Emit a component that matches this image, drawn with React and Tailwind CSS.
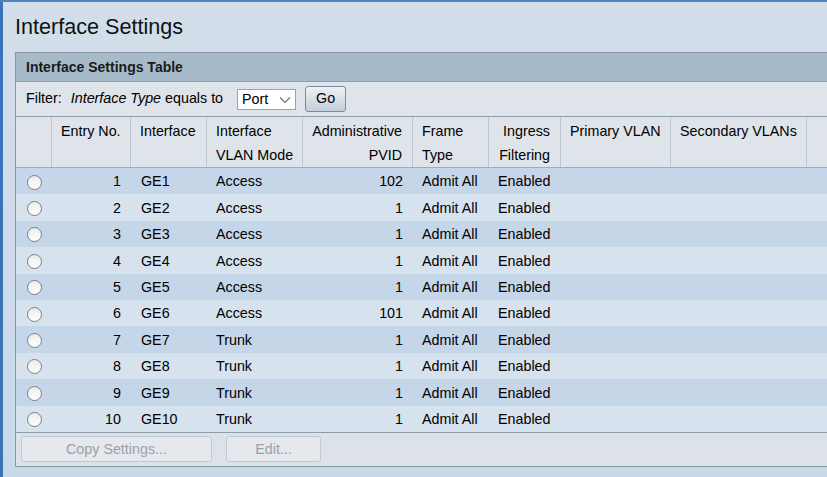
import React from "react";

const rows = [
  [1, "GE1", "Access", 102],
  [2, "GE2", "Access", 1],
  [3, "GE3", "Access", 1],
  [4, "GE4", "Access", 1],
  [5, "GE5", "Access", 1],
  [6, "GE6", "Access", 101],
  [7, "GE7", "Trunk", 1],
  [8, "GE8", "Trunk", 1],
  [9, "GE9", "Trunk", 1],
  [10, "GE10", "Trunk", 1],
];

const cols = "grid grid-cols-[36px_79px_76px_96px_110px_76px_72px_110px_136px_1fr]";

function Radio() {
  return (
    <span className="block w-[15px] h-[15px] rounded-full border border-[#7b7f85] bg-gradient-to-b from-[#ececec] to-[#ffffff]" />
  );
}

function HCell({ children, align = "left", last = false }) {
  return (
    <div
      className={`flex flex-col pt-[2px] leading-[24px] border-r ${last ? "border-r-0" : "border-[#bcc6d0]"} ${
        align === "right" ? "items-end pr-[10px]" : "items-start pl-[9px]"
      }`}
    >
      {children}
    </div>
  );
}

export default function App() {
  return (
    <div
      className="w-[827px] h-[477px] overflow-hidden bg-[#c6d7e9] text-black flex flex-col border-t-2 border-[#4f82ba]"
      style={{ fontFamily: '"Liberation Sans", Arial, sans-serif' }}
    >
      <div className="flex flex-1 min-h-0">
        <div className="w-[3px] bg-[#3b74b6] shrink-0" />
        <div className="flex-1 flex flex-col bg-gradient-to-b from-[#d3deea] to-[#c9d9ea]">
          <div className="h-[50px] pl-[12px] pt-[12px] text-[21.6px] leading-[26px] text-[#111]">
            Interface Settings
          </div>
          <div className="ml-[12px] border-l border-t border-b border-[#8797a6] flex flex-col text-[14.3px]">
            <div className="h-[29px] bg-[#a6bac9] border-b border-[#8d9dab] flex items-center pl-[10px] font-bold text-[14px] text-[#1a1a1a]">
              Interface Settings Table
            </div>
            <div className="h-[35px] bg-[#dfe4ea] border-b border-[#8d9dab] flex items-center pl-[10px]">
              <span>Filter:</span>
              <span className="ml-[9px]">
                <i>Interface Type</i> equals to
              </span>
              <span className="ml-[14px] w-[59px] h-[21px] bg-white border border-[#9aa3ad] flex items-center justify-between pl-[4px] pr-[4px]">
                <span className="leading-none">Port</span>
                <svg width="12" height="8" viewBox="0 0 12 8" className="mt-[1px]">
                  <path d="M1 1.5 L6 6.5 L11 1.5" fill="none" stroke="#6b6f75" strokeWidth="1.1" />
                </svg>
              </span>
              <button className="ml-[9px] w-[41px] h-[26px] rounded-[3px] border border-[#7d8c9c] bg-gradient-to-b from-[#eef2f6] to-[#c3cfdb] flex items-center justify-center text-[14.3px]">
                Go
              </button>
            </div>
            <div className={`${cols} h-[51px] bg-[#dfe4ea] border-b border-[#a0adb9]`}>
              <HCell>{""}</HCell>
              <HCell>Entry No.</HCell>
              <HCell>Interface</HCell>
              <HCell>
                <span>Interface</span>
                <span>VLAN Mode</span>
              </HCell>
              <HCell align="right">
                <span>Administrative</span>
                <span>PVID</span>
              </HCell>
              <HCell>
                <span>Frame</span>
                <span>Type</span>
              </HCell>
              <HCell align="right">
                <span>Ingress</span>
                <span>Filtering</span>
              </HCell>
              <HCell>Primary VLAN</HCell>
              <HCell>Secondary VLANs</HCell>
              <div />
            </div>
            {rows.map(([n, ifc, mode, pvid], i) => (
              <div
                key={n}
                className={`${cols} h-[26.4px] items-center pt-[2px] ${i % 2 === 0 ? "bg-[#c6d6e9]" : "bg-[#d6e2ee]"}`}
              >
                <div className="flex justify-center">
                  <Radio />
                </div>
                <div className="text-right pr-[10px]">{n}</div>
                <div className="pl-[10px]">{ifc}</div>
                <div className="pl-[9px]">{mode}</div>
                <div className="text-right pr-[10px]">{pvid}</div>
                <div className="pl-[9px]">Admit All</div>
                <div className="pl-[9px]">Enabled</div>
                <div />
                <div />
                <div />
              </div>
            ))}
            <div className="h-[34px] bg-[#dde2e9] border-t border-[#8d9dab] flex items-center pl-[5px] gap-[14px]">
              <button className="w-[191px] h-[26px] rounded-[3px] border border-[#c3c9d1] bg-[#e5e8ed] text-[#9aa0a7] text-[14.3px]">
                Copy Settings...
              </button>
              <button className="w-[95px] h-[26px] rounded-[3px] border border-[#c3c9d1] bg-[#e5e8ed] text-[#9aa0a7] text-[14.3px]">
                Edit...
              </button>
            </div>
          </div>
          <div className="flex-1" />
        </div>
      </div>
    </div>
  );
}
